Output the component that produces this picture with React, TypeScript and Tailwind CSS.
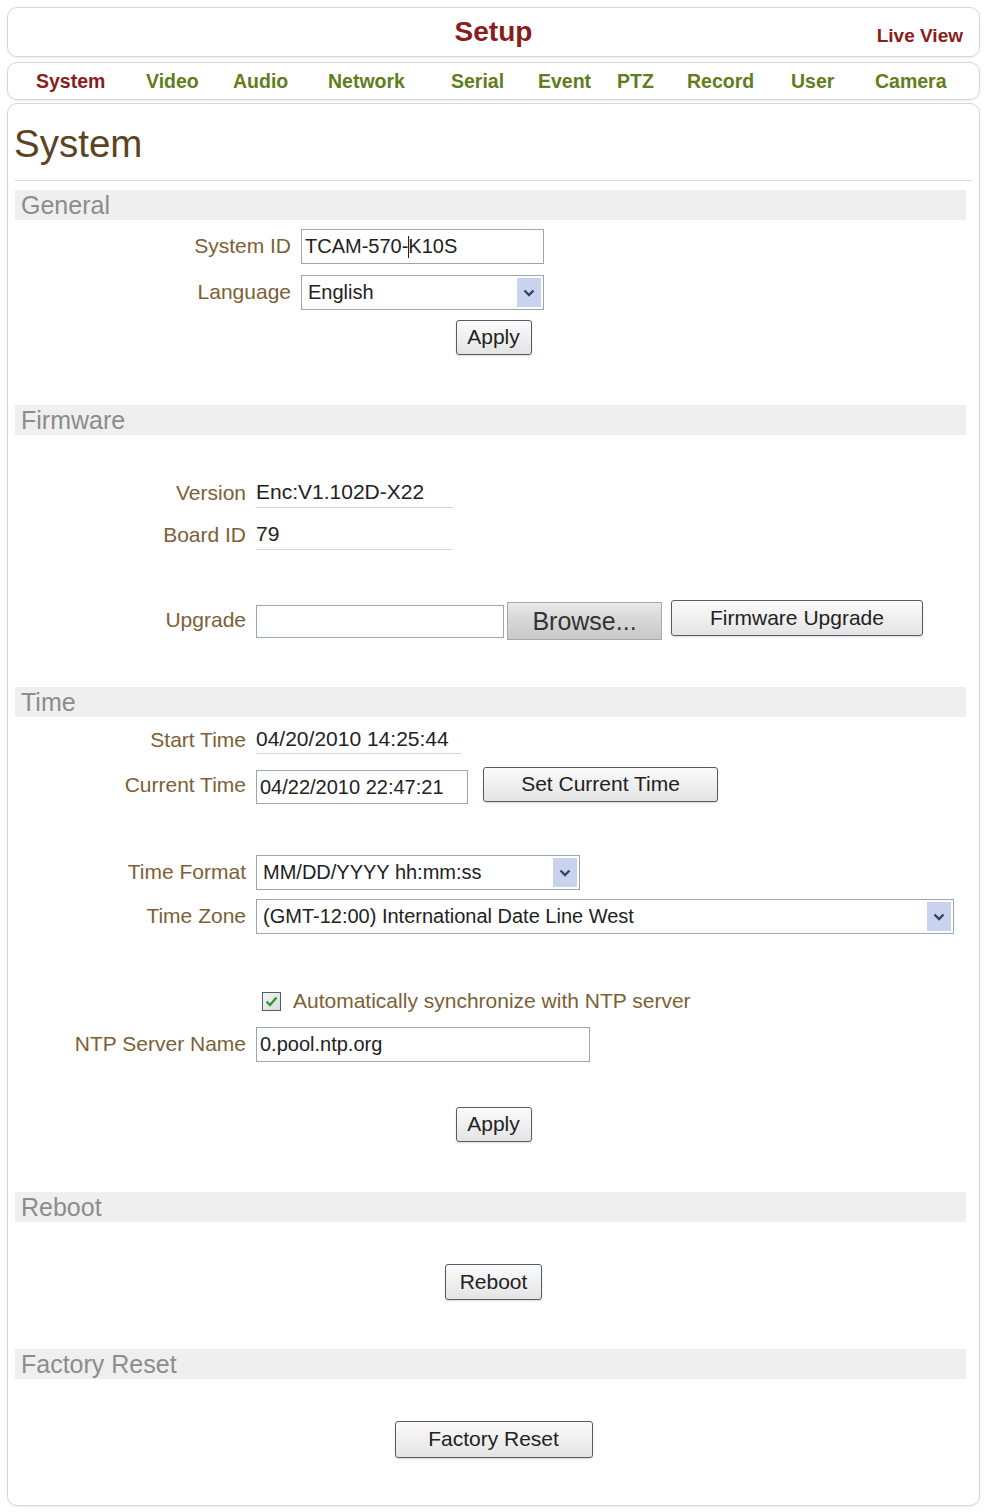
import React from 'react';

// menu tabs, each cell wide enough to start the next one where it sits in the menu bar
const tabs = [
  { label: 'System', active: true, width: 'w-[110px]' },
  { label: 'Video', active: false, width: 'w-[87px]' },
  { label: 'Audio', active: false, width: 'w-[95px]' },
  { label: 'Network', active: false, width: 'w-[123px]' },
  { label: 'Serial', active: false, width: 'w-[87px]' },
  { label: 'Event', active: false, width: 'w-[79px]' },
  { label: 'PTZ', active: false, width: 'w-[70px]' },
  { label: 'Record', active: false, width: 'w-[104px]' },
  { label: 'User', active: false, width: 'w-[84px]' },
  { label: 'Camera', active: false, width: 'w-[80px]' },
];

const SectionBar = ({ title, className = '' }: { title: string; className?: string }) => (
  <div className={`ml-[7px] mr-[13px] h-[30px] bg-[#efefef] flex items-center pl-[6px] text-[25px] text-[#8c8c8c] ${className}`}>
    {title}
  </div>
);

const Label = ({ text, width }: { text: string; width: string }) => (
  <div className={`${width} shrink-0 text-right text-[21px] text-[#7d6035]`}>{text}</div>
);

const Button = ({ text, width, height = 'h-[35px]' }: { text: string; width: string; height?: string }) => (
  <button
    className={`${width} ${height} rounded-[3px] border border-[#4f5d6c] bg-gradient-to-b from-[#fbfbfb] to-[#e4e4e4] shadow-[0_1px_2px_rgba(0,0,0,0.15)] text-[21px] text-[#222]`}
  >
    {text}
  </button>
);

const TextBox = ({
  value,
  width,
  height = 'h-[35px]',
  caretAt,
}: {
  value: string;
  width: string;
  height?: string;
  caretAt?: number;
}) => (
  <div className={`${width} ${height} border border-[#9aa6b4] bg-white flex items-center pl-[3px] text-[20px] text-[#222] whitespace-nowrap`}>
    {caretAt === undefined ? (
      value
    ) : (
      <>
        {value.slice(0, caretAt)}
        <span className="inline-block w-px h-[22px] bg-[#222] -mr-px" />
        {value.slice(caretAt)}
      </>
    )}
  </div>
);

const Chevron = () => (
  <svg width="12" height="8" viewBox="0 0 12 8">
    <path d="M1.5 1.5 L6 6 L10.5 1.5" fill="none" stroke="#34446e" strokeWidth="2.4" />
  </svg>
);

const Select = ({ value, width }: { value: string; width: string }) => (
  <div className={`${width} h-[35px] border border-[#9aa6b4] bg-white flex items-center text-[20px] text-[#222]`}>
    <span className="flex-1 pl-[6px] whitespace-nowrap">{value}</span>
    <span className="w-[24px] h-[29px] mr-[2px] bg-[#c9d3ee] flex items-center justify-center">
      <Chevron />
    </span>
  </div>
);

const ReadValue = ({ value, width, height = 'h-[30px]' }: { value: string; width: string; height?: string }) => (
  <div className={`${width} ${height} border-b border-[#d4d4d4] flex items-center text-[21px] text-[#222]`}>{value}</div>
);

export default function App() {
  return (
    <div className="w-[984px] min-h-[1512px] bg-white pt-[7px] leading-[1.15] font-['Liberation_Sans',Arial,sans-serif]">
      {/* title bar */}
      <div className="mx-[7px] w-[973px] h-[50px] rounded-[10px] border border-[#d6d6d6] shadow-[0_1px_2px_rgba(0,0,0,0.08)] grid grid-cols-[1fr_auto_1fr] items-center">
        <div />
        <div className="text-[28px] font-bold text-[#8a1c1c]">Setup</div>
        <div className="justify-self-end pr-[16px] mt-[8px] text-[19px] font-bold text-[#8a1c1c]">Live View</div>
      </div>

      {/* menu tabs */}
      <div className="mx-[7px] mt-[5px] w-[973px] h-[38px] rounded-[10px] border border-[#d6d6d6] shadow-[0_1px_2px_rgba(0,0,0,0.08)] flex items-center pl-[28px]">
        {tabs.map((t) => (
          <span
            key={t.label}
            className={`${t.width} shrink-0 text-[19.5px] font-bold ${t.active ? 'text-[#8a1c1c]' : 'text-[#617d1c]'}`}
          >
            {t.label}
          </span>
        ))}
      </div>

      {/* page body */}
      <div className="mx-[7px] mt-[3px] w-[973px] h-[1403px] rounded-[10px] border border-[#d6d6d6] shadow-[0_1px_2px_rgba(0,0,0,0.08)]">
        <div className="h-[76px] pt-[4px] pl-[6px] flex items-center text-[38.5px] text-[#5c4422]">System</div>
        <div className="mx-[7px] border-t border-[#d8d8d8]" />

        <SectionBar title="General" className="mt-[9px]" />
        <div className="mt-[9px] flex items-center gap-[10px]">
          <Label text="System ID" width="w-[283px]" />
          <TextBox value="TCAM-570-K10S" width="w-[243px]" caretAt={9} />
        </div>
        <div className="mt-[11px] flex items-center gap-[10px]">
          <Label text="Language" width="w-[283px]" />
          <Select value="English" width="w-[243px]" />
        </div>
        <div className="mt-[10px] flex justify-center">
          <Button text="Apply" width="w-[76px]" />
        </div>

        <SectionBar title="Firmware" className="mt-[50px]" />
        <div className="mt-[43px] flex items-center gap-[10px]">
          <Label text="Version" width="w-[238px]" />
          <ReadValue value="Enc:V1.102D-X22" width="w-[197px]" />
        </div>
        <div className="mt-[12px] flex items-center gap-[10px]">
          <Label text="Board ID" width="w-[238px]" />
          <ReadValue value="79" width="w-[197px]" />
        </div>
        <div className="mt-[50px] h-[40px] flex items-start">
          <div className="self-center">
            <Label text="Upgrade" width="w-[238px]" />
          </div>
          <div className="ml-[10px] mt-[5px] w-[248px] h-[33px] border border-[#9aa6b4] bg-white" />
          <button className="ml-[3px] mt-[2px] w-[155px] h-[38px] border border-[#a9a9a9] bg-gradient-to-b from-[#e9e9e9] via-[#d6d6d6] to-[#c9c9c9] text-[25px] text-[#333]">
            Browse...
          </button>
          <div className="ml-[9px]">
            <Button text="Firmware Upgrade" width="w-[252px]" height="h-[36px]" />
          </div>
        </div>

        <SectionBar title="Time" className="mt-[47px]" />
        <div className="mt-[9px] flex items-center gap-[10px]">
          <Label text="Start Time" width="w-[238px]" />
          <ReadValue value="04/20/2010 14:25:44" width="w-[205px]" height="h-[28px]" />
        </div>
        <div className="mt-[13px] h-[36px] flex items-start">
          <div className="self-center">
            <Label text="Current Time" width="w-[238px]" />
          </div>
          <div className="ml-[10px] mt-[3px]">
            <TextBox value="04/22/2010 22:47:21" width="w-[212px]" height="h-[34px]" />
          </div>
          <div className="ml-[15px]">
            <Button text="Set Current Time" width="w-[235px]" />
          </div>
        </div>
        <div className="mt-[52px] flex items-center gap-[10px]">
          <Label text="Time Format" width="w-[238px]" />
          <Select value="MM/DD/YYYY hh:mm:ss" width="w-[324px]" />
        </div>
        <div className="mt-[9px] flex items-center gap-[10px]">
          <Label text="Time Zone" width="w-[238px]" />
          <Select value="(GMT-12:00) International Date Line West" width="w-[698px]" />
        </div>
        <div className="mt-[57px] h-[20px] flex items-center pl-[254px]">
          <span className="w-[19px] h-[19px] border border-[#4e5e70] bg-gradient-to-br from-[#f4f4f4] to-[#dcdcdc] flex items-center justify-center">
            <svg width="13" height="11" viewBox="0 0 13 11">
              <path d="M1.5 5.5 L5 9 L11.5 1.5" fill="none" stroke="#2f9a3a" strokeWidth="2.4" />
            </svg>
          </span>
          <span className="ml-[12px] text-[21px] text-[#7d6035]">Automatically synchronize with NTP server</span>
        </div>
        <div className="mt-[16px] flex items-center gap-[10px]">
          <Label text="NTP Server Name" width="w-[238px]" />
          <TextBox value="0.pool.ntp.org" width="w-[334px]" />
        </div>
        <div className="mt-[45px] flex justify-center">
          <Button text="Apply" width="w-[76px]" />
        </div>

        <SectionBar title="Reboot" className="mt-[50px]" />
        <div className="mt-[42px] flex justify-center">
          <Button text="Reboot" width="w-[97px]" height="h-[36px]" />
        </div>

        <SectionBar title="Factory Reset" className="mt-[49px]" />
        <div className="mt-[42px] flex justify-center">
          <Button text="Factory Reset" width="w-[198px]" height="h-[37px]" />
        </div>
      </div>
    </div>
  );
}
